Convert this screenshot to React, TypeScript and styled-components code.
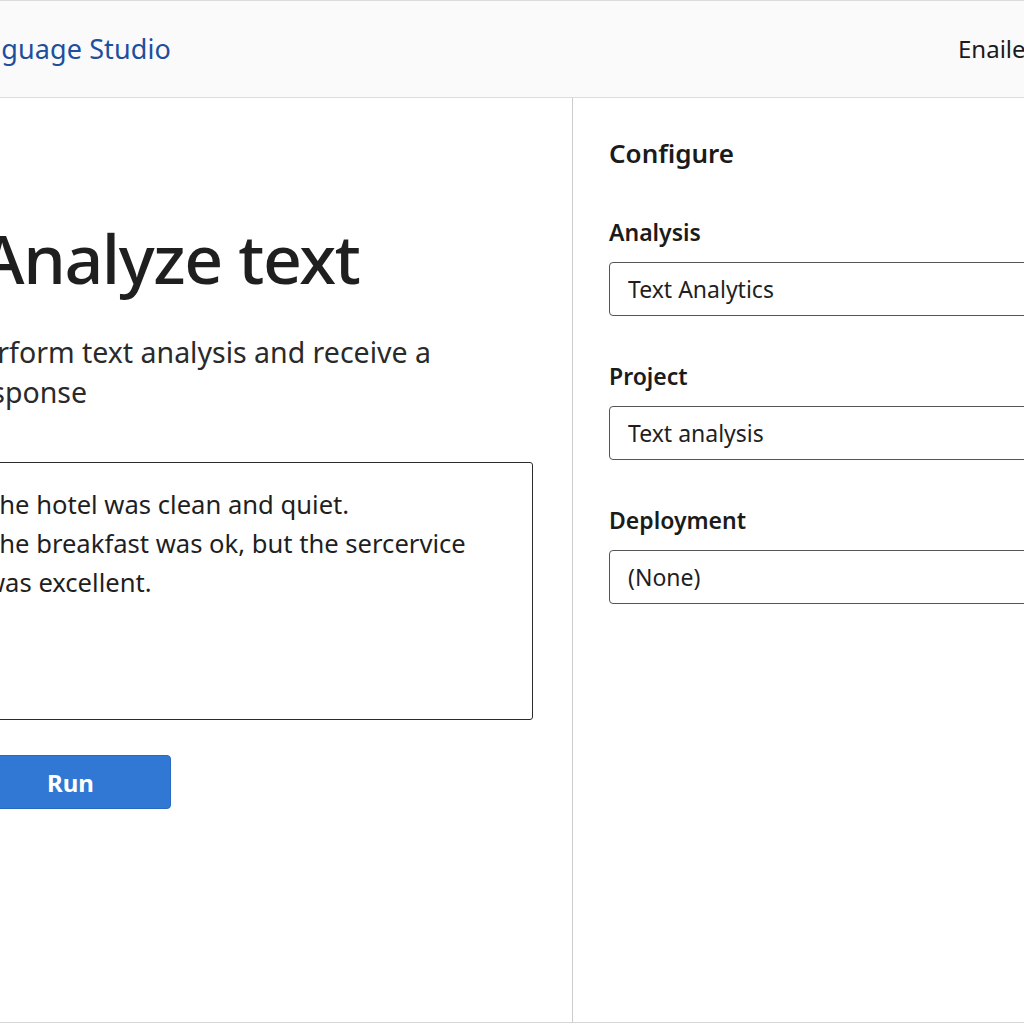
import React from "react";
import styled, { createGlobalStyle } from "styled-components";

const Global = createGlobalStyle`
  html, body { margin: 0; padding: 0; background: #ffffff; overflow: hidden; }
  body { font-family: "Noto Sans", "Open Sans", "DejaVu Sans", sans-serif; color: #222; }
  * { box-sizing: border-box; }
`;

const Page = styled.div`
  width: 1150px;
  margin-left: -60px;
  height: 1024px;
  display: flex;
  flex-direction: column;
  border-top: 1px solid #dcdcdc;
`;

const Header = styled.header`
  height: 97px;
  flex: none;
  display: flex;
  align-items: center;
  justify-content: space-between;
  padding: 0 0 2px 15px;
  background: #fafafa;
  border-bottom: 1px solid #dcdcdc;
`;

const Brand = styled.div`
  font-size: 27px;
  color: #1d4f9f;
  letter-spacing: 0.1px;
`;

const User = styled.div`
  width: 132px;
  font-size: 24px;
  color: #1b1b1b;
  white-space: nowrap;
`;

const Body = styled.main`
  flex: 1;
  display: grid;
  grid-template-columns: 633px 1fr;
  border-bottom: 1px solid #d6d6d6;
  margin-bottom: 1px;
`;

const LeftPane = styled.section`
  padding: 117px 40px 0 30px;
  border-right: 1px solid #cccccc;
  display: flex;
  flex-direction: column;
`;

const Title = styled.h1`
  margin: 0 0 0 10px;
  font-size: 68px;
  font-weight: 500;
  line-height: 86px;
  color: #1f1f1f;
  letter-spacing: -1.4px;
`;

const Subtitle = styled.p`
  margin: 31px 0 0 -6px;
  font-size: 28.5px;
  line-height: 40px;
  color: #2a2a2a;
  width: 540px;
`;

const TextArea = styled.textarea`
  margin: 50px 0 0 -2px;
  width: 565px;
  height: 258px;
  resize: none;
  border: 1px solid #2b2b2b;
  border-radius: 3px;
  padding: 22px 16px;
  font-family: inherit;
  font-size: 25.6px;
  line-height: 39px;
  color: #1f1f1f;
  background: #fff;
  outline: none;
  white-space: pre-wrap;
  overflow: hidden;
`;

const RunButton = styled.button`
  margin-top: 35px;
  align-self: flex-start;
  width: 201px;
  height: 54px;
  border: 1px solid #2a69c2;
  border-radius: 4px;
  background: #3078d3;
  color: #ffffff;
  font-family: inherit;
  font-size: 24px;
  font-weight: 700;
  cursor: pointer;
`;

const RightPane = styled.section`
  padding: 35px 36px 0 36px;
  display: flex;
  flex-direction: column;
`;

const PanelTitle = styled.h2`
  margin: 0 0 40px;
  font-size: 26px;
  font-weight: 600;
  line-height: 40px;
  color: #1b1b1b;
`;

const Field = styled.div`
  display: flex;
  flex-direction: column;
  gap: 11px;
  margin-bottom: 41px;
`;

const Label = styled.div`
  font-size: 23px;
  font-weight: 600;
  line-height: 38px;
  color: #1b1b1b;
`;

const SelectBox = styled.div`
  height: 54px;
  border: 1px solid #555;
  border-radius: 4px;
  padding: 0 18px;
  display: flex;
  align-items: center;
  font-size: 23px;
  color: #1f1f1f;
  background: #fff;
`;

const fields = [
  { label: "Analysis", value: "Text Analytics" },
  { label: "Project", value: "Text analysis" },
  { label: "Deployment", value: "(None)" },
];

export default function App() {
  return (
    <>
      <Global />
      <Page>
        <Header>
          <Brand>Language Studio</Brand>
          <User>Enailevia</User>
        </Header>
        <Body>
          <LeftPane>
            <Title>Analyze text</Title>
            <Subtitle>Perform text analysis and receive a response</Subtitle>
            <TextArea
              readOnly
              defaultValue={"The hotel was clean and quiet.\nThe breakfast was ok, but the sercervice\nwas excellent."}
            />
            <RunButton>Run</RunButton>
          </LeftPane>
          <RightPane>
            <PanelTitle>Configure</PanelTitle>
            {fields.map((f) => (
              <Field key={f.label}>
                <Label>{f.label}</Label>
                <SelectBox>{f.value}</SelectBox>
              </Field>
            ))}
          </RightPane>
        </Body>
      </Page>
    </>
  );
}
